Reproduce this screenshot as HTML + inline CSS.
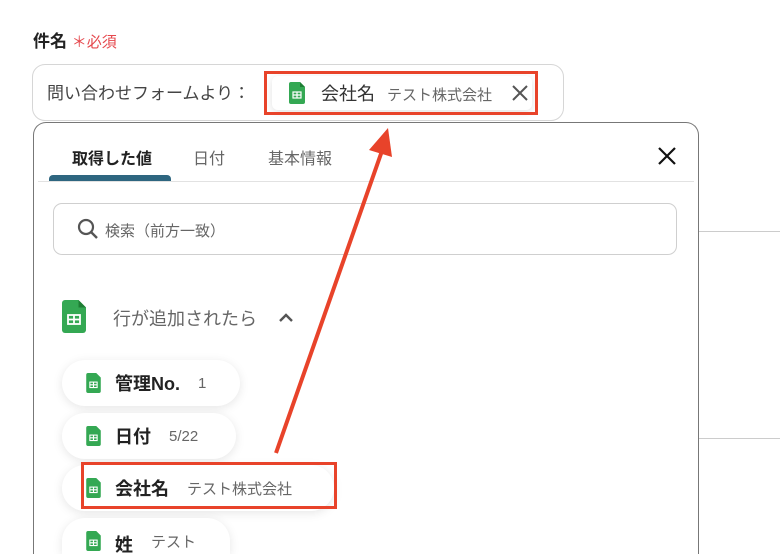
<!DOCTYPE html>
<html><head><meta charset="utf-8"><style>
*{margin:0;padding:0;box-sizing:border-box}
html,body{width:780px;height:554px;overflow:hidden}
body{background:#fff;font-family:"Liberation Sans","Noto Sans CJK JP",sans-serif;position:relative;color:#333}
.abs{position:absolute}
.chip{position:absolute;left:62px;height:46px;border-radius:23px;background:#fff;box-shadow:0 2px 10px rgba(0,0,0,.1);display:flex;align-items:center;padding-left:24px;font-size:18px;font-weight:bold;color:#222;white-space:nowrap}
.chip small{font-size:15px;font-weight:normal;color:#666;margin-left:18px}
.ic{display:inline-block;margin-right:14px}
</style></head><body>
<div class="abs" style="left:33px;top:27px;font-size:17px;font-weight:bold;color:#222">件名 <span style="color:#e5484d;font-weight:normal;font-size:15px">＊必須</span></div>
<div class="abs" style="left:32px;top:64px;width:532px;height:57px;border:1px solid #d6d6d6;border-radius:13px;"></div>
<div class="abs" style="left:47px;top:79px;font-size:17px;color:#444">問い合わせフォームより：</div>
<div class="abs" style="left:272px;top:76px;width:260px;height:34px;box-shadow:0 2px 8px rgba(0,0,0,.12);border-radius:6px;background:#fff"></div>
<svg class="abs" style="left:289px;top:82px" width="16" height="22" viewBox="0 0 16 22"><path d="M2 0h9l5 5v15a2 2 0 0 1-2 2H2a2 2 0 0 1-2-2V2a2 2 0 0 1 2-2z" fill="#34a853"/><path d="M11 0v5h5z" fill="#1e7e34"/><rect x="4" y="10" width="8" height="6" fill="none" stroke="#fff" stroke-width="1.2"/><path d="M8 10v6M4 13h8" stroke="#fff" stroke-width="1.2"/></svg>
<div class="abs" style="left:321px;top:80px;font-size:18px;color:#333">会社名<span style="font-size:15px;color:#666;margin-left:12px">テスト株式会社</span></div>
<svg class="abs" style="left:512px;top:85px" width="16" height="16"><path d="M1 1L15 15M15 1L1 15" stroke="#555" stroke-width="2"/></svg>
<div class="abs" style="left:264px;top:71px;width:274px;height:44px;border:3px solid #e8432a"></div>

<div class="abs" style="left:699px;top:231px;width:81px;height:1px;background:#ccc"></div>
<div class="abs" style="left:699px;top:438px;width:81px;height:1px;background:#ccc"></div>

<div class="abs" style="left:33px;top:122px;width:666px;height:432px;border:1px solid #777;border-bottom:none;border-radius:13px 13px 0 0;background:#fff"></div>
<div class="abs" style="left:72px;top:145px;font-size:16px;font-weight:bold;color:#222">取得した値</div>
<div class="abs" style="left:193px;top:145px;font-size:16px;color:#666">日付</div>
<div class="abs" style="left:268px;top:145px;font-size:16px;color:#666">基本情報</div>
<div class="abs" style="left:49px;top:175px;width:122px;height:6px;background:#2e6680;border-radius:4px 4px 0 0"></div>
<div class="abs" style="left:38px;top:181px;width:656px;height:1px;background:#e2e2e2"></div>
<svg class="abs" style="left:657px;top:146px" width="20" height="20"><path d="M2 2L18 18M18 2L2 18" stroke="#111" stroke-width="2.2"/></svg>
<div class="abs" style="left:53px;top:203px;width:624px;height:52px;border:1px solid #cfcfcf;border-radius:9px"></div>
<svg class="abs" style="left:77px;top:218px" width="22" height="22"><circle cx="9" cy="9" r="7" fill="none" stroke="#555" stroke-width="2.2"/><path d="M14 14l6 6" stroke="#555" stroke-width="2.4"/></svg>
<div class="abs" style="left:105px;top:220px;font-size:15px;color:#666">検索（前方一致）</div>

<svg class="abs" style="left:62px;top:300px" width="24" height="33" viewBox="0 0 16 22"><path d="M2 0h9l5 5v15a2 2 0 0 1-2 2H2a2 2 0 0 1-2-2V2a2 2 0 0 1 2-2z" fill="#34a853"/><path d="M11 0v5h5z" fill="#1e7e34"/><rect x="4" y="10" width="8" height="6" fill="none" stroke="#fff" stroke-width="1.2"/><path d="M8 10v6M4 13h8" stroke="#fff" stroke-width="1.2"/></svg>
<div class="abs" style="left:113px;top:305px;font-size:18px;color:#666">行が追加されたら</div>
<svg class="abs" style="left:278px;top:312px" width="16" height="12"><path d="M2 9l6-6 6 6" fill="none" stroke="#555" stroke-width="2.4"/></svg>

<div class="chip" style="top:360px;width:178px"><svg class="ic" width="15" height="20" viewBox="0 0 16 22"><path d="M2 0h9l5 5v15a2 2 0 0 1-2 2H2a2 2 0 0 1-2-2V2a2 2 0 0 1 2-2z" fill="#34a853"/><rect x="4" y="10" width="8" height="6" fill="none" stroke="#fff" stroke-width="1.2"/><path d="M8 10v6M4 13h8" stroke="#fff" stroke-width="1.2"/></svg>管理No.<small>1</small></div>
<div class="chip" style="top:413px;width:174px"><svg class="ic" width="15" height="20" viewBox="0 0 16 22"><path d="M2 0h9l5 5v15a2 2 0 0 1-2 2H2a2 2 0 0 1-2-2V2a2 2 0 0 1 2-2z" fill="#34a853"/><rect x="4" y="10" width="8" height="6" fill="none" stroke="#fff" stroke-width="1.2"/><path d="M8 10v6M4 13h8" stroke="#fff" stroke-width="1.2"/></svg>日付<small>5/22</small></div>
<div class="chip" style="top:465px;width:272px"><svg class="ic" width="15" height="20" viewBox="0 0 16 22"><path d="M2 0h9l5 5v15a2 2 0 0 1-2 2H2a2 2 0 0 1-2-2V2a2 2 0 0 1 2-2z" fill="#34a853"/><rect x="4" y="10" width="8" height="6" fill="none" stroke="#fff" stroke-width="1.2"/><path d="M8 10v6M4 13h8" stroke="#fff" stroke-width="1.2"/></svg>会社名<small>テスト株式会社</small></div>
<div class="chip" style="top:518px;width:168px;height:36px;border-radius:23px 23px 0 0;align-items:flex-start;padding-top:13px"><svg class="ic" width="15" height="20" viewBox="0 0 16 22"><path d="M2 0h9l5 5v15a2 2 0 0 1-2 2H2a2 2 0 0 1-2-2V2a2 2 0 0 1 2-2z" fill="#34a853"/><rect x="4" y="10" width="8" height="6" fill="none" stroke="#fff" stroke-width="1.2"/><path d="M8 10v6M4 13h8" stroke="#fff" stroke-width="1.2"/></svg>姓<small>テスト</small></div>
<div class="abs" style="left:81px;top:462px;width:256px;height:47px;border:3px solid #e8432a"></div>

<svg class="abs" style="left:0;top:0" width="780" height="554"><path d="M276 453L383 148" stroke="#e8432a" stroke-width="4"/><path d="M388 128L369 150L392 157Z" fill="#e8432a"/></svg>
</body></html>
